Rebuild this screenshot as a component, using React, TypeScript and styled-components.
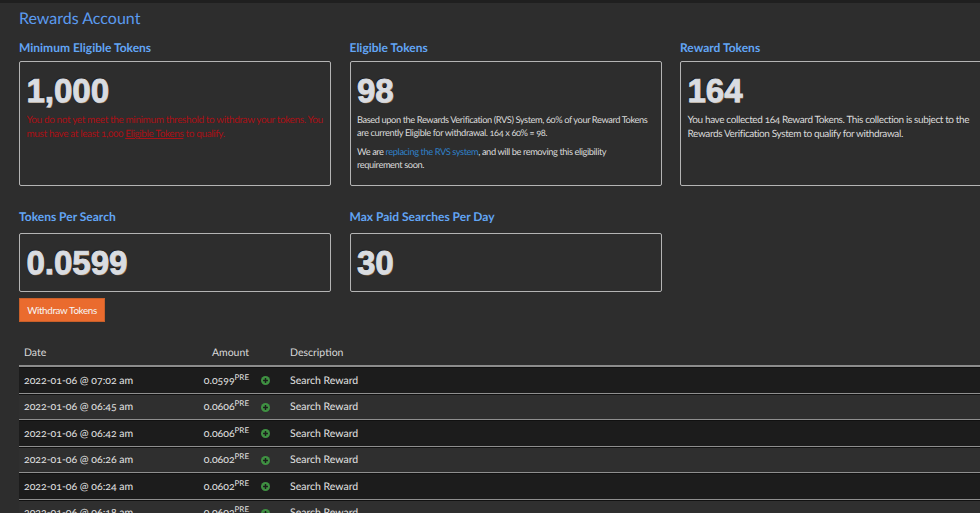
import React from "react";
import styled, { createGlobalStyle } from "styled-components";

const Global = createGlobalStyle`
  html, body { margin: 0; padding: 0; background: #2d2d2d; height: 100%; overflow: hidden; }
  body {
    font-family: "Lato", "Noto Sans", sans-serif;
    color: #e4e4e4;
    font-variant-numeric: oldstyle-nums;
    text-rendering: geometricPrecision;
  }
`;

const Page = styled.div`
  width: 980px;
  height: 513px;
  overflow: hidden;
  box-sizing: border-box;
  border-top: 3px solid #1f1f1f;
  padding-left: 19px;
`;

const Title = styled.h1`
  margin: 0;
  padding-top: 6px;
  height: 29px;
  font-size: 16px;
  line-height: 20px;
  font-weight: 400;
  color: #5b9bf0;
`;

const CardGrid = styled.div`
  display: grid;
  grid-template-columns: repeat(3, 312px);
  column-gap: 18.5px;
  width: 1000px;
`;

const Cell = styled.section`
  display: flex;
  flex-direction: column;
`;

const Label = styled.h2<{ $gap: number }>`
  margin: 0 0 ${(p) => p.$gap}px;
  font-size: 12px;
  line-height: 20px;
  font-weight: 700;
  color: #62a5f5;
`;

const Card = styled.div<{ $h: number }>`
  box-sizing: border-box;
  height: ${(p) => p.$h}px;
  border: 1px solid #b4b4b4;
  border-radius: 2px;
  padding: 0 6.5px;
  overflow: hidden;
`;

const Big = styled.div<{ $top: number }>`
  margin: ${(p) => p.$top}px 0 4px;
  font-family: "Liberation Sans", Arial, sans-serif;
  font-weight: 700;
  font-size: 33px;
  line-height: 36px;
  color: #d9dce1;
  font-variant-numeric: lining-nums;
  -webkit-text-stroke: 0.9px #d9dce1;
  text-shadow: 0.6px 0.6px 0 #9a7850, -0.6px -0.6px 1px #111;
`;

const Note = styled.p<{ $danger?: boolean; $loose?: boolean }>`
  margin: 0 0 6px;
  font-size: ${(p) => (p.$loose ? 10 : 9.3)}px;
  line-height: ${(p) => (p.$loose ? 14 : 13)}px;
  letter-spacing: ${(p) => (p.$loose ? -0.38 : -0.42)}px;
  color: ${(p) => (p.$danger ? "#aa1016" : "#dadada")};
  a { color: ${(p) => (p.$danger ? "#aa1016" : "#2f80c8")}; }
  a.plain { text-decoration: none; }
`;

const Spacer = styled.div`
  height: 21px;
`;

const Withdraw = styled.button`
  display: block;
  margin-top: 6px;
  width: 86px;
  height: 24px;
  padding: 0;
  border: 1px solid #c9602a;
  background: #ea6b2e;
  color: #f6f6f6;
  font: 400 9.8px "Lato", sans-serif;
  letter-spacing: -0.33px;
`;

const Table = styled.div`
  margin-top: 19px;
  width: 1000px;
`;

const Columns = styled.div`
  display: grid;
  grid-template-columns: 160px 70px 41px 1fr;
  align-items: center;
`;

const Head = styled(Columns)`
  height: 26px;
  font-size: 10.5px;
  color: #d8d8d8;
  border-bottom: 2px solid #8c8c8c;
  box-sizing: border-box;
`;

const Row = styled(Columns)<{ $odd: boolean }>`
  box-sizing: border-box;
  height: 26.5px;
  padding-top: 1px;
  font-size: 10.5px;
  color: #e2e2e2;
  background: ${(p) => (p.$odd ? "#1c1c1c" : "#2f2f2f")};
  border-top: 1px solid #111;
  border-bottom: 1px solid #8f8f8f;
`;

const DateCell = styled.div`
  padding-left: 5px;
`;

const Amount = styled.div`
  text-align: right;
  sup { font-size: 8px; line-height: 0; vertical-align: 4px; }
`;

const IconCell = styled.div`
  display: flex;
  padding-left: 12px;
`;

const rows: [string, string][] = [
  ["2022-01-06 @ 07:02 am", "0.0599"],
  ["2022-01-06 @ 06:45 am", "0.0606"],
  ["2022-01-06 @ 06:42 am", "0.0606"],
  ["2022-01-06 @ 06:26 am", "0.0602"],
  ["2022-01-06 @ 06:24 am", "0.0602"],
  ["2022-01-06 @ 06:18 am", "0.0602"],
];

const Plus = () => (
  <svg width="9" height="9" viewBox="0 0 10 10">
    <circle cx="5" cy="5" r="5" fill="#3f9142" />
    <path d="M5 2.3v5.4M2.3 5h5.4" stroke="#1c1c1c" strokeWidth="1.6" />
  </svg>
);

export default function App() {
  return (
    <Page>
      <Global />
      <Title>Rewards Account</Title>
      <CardGrid>
        <Cell>
          <Label $gap={3}>Minimum Eligible Tokens</Label>
          <Card $h={125}>
            <Big $top={11}>1,000</Big>
            <Note $danger $loose>
              You do not yet meet the minimum threshold to withdraw your tokens. You must have at least 1,000{" "}
              <a href="#e">Eligible Tokens</a> to qualify.
            </Note>
          </Card>
        </Cell>
        <Cell>
          <Label $gap={3}>Eligible Tokens</Label>
          <Card $h={125}>
            <Big $top={11}>98</Big>
            <Note>
              Based upon the Rewards Verification (RVS) System, 60% of your Reward Tokens are currently Eligible for
              withdrawal. 164 x 60% = 98.
            </Note>
            <Note>
              We are{" "}
              <a className="plain" href="#r">
                replacing the RVS system
              </a>
              , and will be removing this eligibility
              <br />
              requirement soon.
            </Note>
          </Card>
        </Cell>
        <Cell>
          <Label $gap={3}>Reward Tokens</Label>
          <Card $h={125}>
            <Big $top={11}>164</Big>
            <Note $loose>
              You have collected 164 Reward Tokens. This collection is subject to the Rewards Verification System to
              qualify for withdrawal.
            </Note>
          </Card>
        </Cell>
      </CardGrid>
      <Spacer />
      <CardGrid>
        <Cell>
          <Label $gap={6}>Tokens Per Search</Label>
          <Card $h={59}>
            <Big $top={11}>0.0599</Big>
          </Card>
          <Withdraw>Withdraw Tokens</Withdraw>
        </Cell>
        <Cell>
          <Label $gap={6}>Max Paid Searches Per Day</Label>
          <Card $h={59}>
            <Big $top={11}>30</Big>
          </Card>
        </Cell>
      </CardGrid>
      <Table>
        <Head>
          <DateCell>Date</DateCell>
          <Amount>Amount</Amount>
          <div />
          <div>Description</div>
        </Head>
        {rows.map(([d, a], i) => (
          <Row key={d} $odd={i % 2 === 0}>
            <DateCell>{d}</DateCell>
            <Amount>
              {a}
              <sup>PRE</sup>
            </Amount>
            <IconCell>
              <Plus />
            </IconCell>
            <div>Search Reward</div>
          </Row>
        ))}
      </Table>
    </Page>
  );
}
